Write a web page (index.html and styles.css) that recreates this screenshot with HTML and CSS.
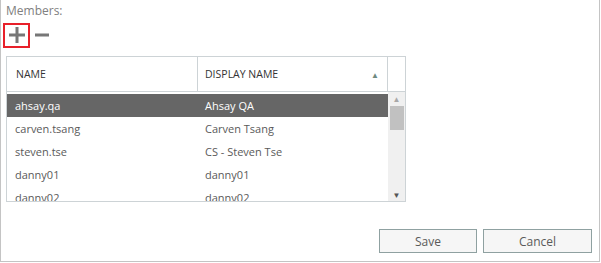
FILE: index.html
```html
<!DOCTYPE html>
<html lang="en">
<head>
  <meta charset="UTF-8">
  <title>Members</title>
  <link rel="stylesheet" href="styles.css">
</head>
<body>
  <div class="panel">
    <div class="label">Members:</div>

    <div class="toolbar">
      <span class="tool tool-add">
        <svg width="18" height="18" viewBox="0 0 18 18"><rect x="7.5" y="1" width="3" height="16" fill="#777"/><rect x="1" y="7.5" width="16" height="3" fill="#777"/></svg>
      </span>
      <span class="tool">
        <svg width="16" height="18" viewBox="0 0 16 18"><rect x="1" y="7.5" width="14" height="3" fill="#777"/></svg>
      </span>
    </div>

    <div class="grid">
      <div class="grid-head">
        <div class="th">NAME</div>
        <div class="th th-sort">DISPLAY NAME <span class="sort">&#9650;</span></div>
        <div class="th"></div>
      </div>
      <div class="grid-body">
        <div class="rows">
          <div class="row selected"><span>ahsay.qa</span><span>Ahsay QA</span></div>
          <div class="row"><span>carven.tsang</span><span>Carven Tsang</span></div>
          <div class="row"><span>steven.tse</span><span>CS - Steven Tse</span></div>
          <div class="row"><span>danny01</span><span>danny01</span></div>
          <div class="row"><span>danny02</span><span>danny02</span></div>
        </div>
        <div class="scrollbar">
          <span class="arrow">&#9650;</span>
          <span class="thumb"></span>
          <span class="arrow arrow-down">&#9660;</span>
        </div>
      </div>
    </div>

    <div class="actions">
      <button>Save</button>
      <button class="wide">Cancel</button>
    </div>
  </div>
</body>
</html>
```

FILE: styles.css
```css
* { box-sizing: border-box; margin: 0; padding: 0; }
body { background: #fff; font-family: "Open Sans", "Noto Sans", sans-serif; font-size: 12px; color: #555; }

.panel {
  width: 600px;
  height: 262px;
  border: 1px solid #c4c4c4;
  border-top: none;
  padding: 2px 0 0 5px;
  display: flex;
  flex-direction: column;
}

.label { color: #808080; font-size: 12px; line-height: 17px; }

.toolbar {
  display: flex;
  align-items: center;
  gap: 4px;
  margin: 3px 0 0 -3px;
  height: 26px;
}

.tool { display: flex; align-items: center; justify-content: center; height: 25px; }
.tool-add { width: 27px; border: 2px solid #e8202a; }

.grid {
  width: 400px;
  margin-top: 8px;
  border: 1px solid #cdd3d6;
}

.grid-head {
  display: grid;
  grid-template-columns: 191px 190px 17px;
  height: 35px;
  border-bottom: 1px solid #cdd3d6;
}

.th {
  display: flex;
  align-items: center;
  padding-left: 9px;
  font-size: 10.5px;
  color: #333;
  border-right: 1px solid #cdd3d6;
}
.th:last-child { border-right: none; }
.th-sort { padding-left: 7px; justify-content: space-between; padding-right: 8px; }
.sort { font-size: 8px; color: #6e8a80; }

.grid-body {
  display: grid;
  grid-template-columns: 381px 17px;
  height: 109px;
  overflow: hidden;
}

.rows { padding-top: 2px; }

.row {
  display: grid;
  grid-template-columns: 191px 190px;
  height: 23px;
  align-items: center;
  font-size: 11px;
  color: #5a5a5a;
}
.row span { padding-left: 8px; }
.row span + span { padding-left: 7px; }
.row.selected { background: #666; color: #fff; }

.scrollbar {
  background: #f0f0f0;
  display: flex;
  flex-direction: column;
  align-items: center;
  padding: 2px 1px 0;
}
.arrow { font-size: 8px; color: #a8a8a8; line-height: 10px; height: 12px; }
.arrow-down { margin-top: auto; margin-bottom: 7px; color: #555; }
.thumb { width: 14px; height: 24px; background: #c1c1c1; }

.actions {
  margin-top: auto;
  margin-bottom: 8px;
  display: flex;
  justify-content: flex-end;
  gap: 6px;
  padding-right: 7px;
}

button {
  width: 98px;
  height: 24px;
  background: #f6f6f6;
  border: 1px solid #8fa1a1;
  font-family: inherit;
  font-size: 12px;
  color: #5a5a5a;
}
button.wide { width: 109px; }
```
